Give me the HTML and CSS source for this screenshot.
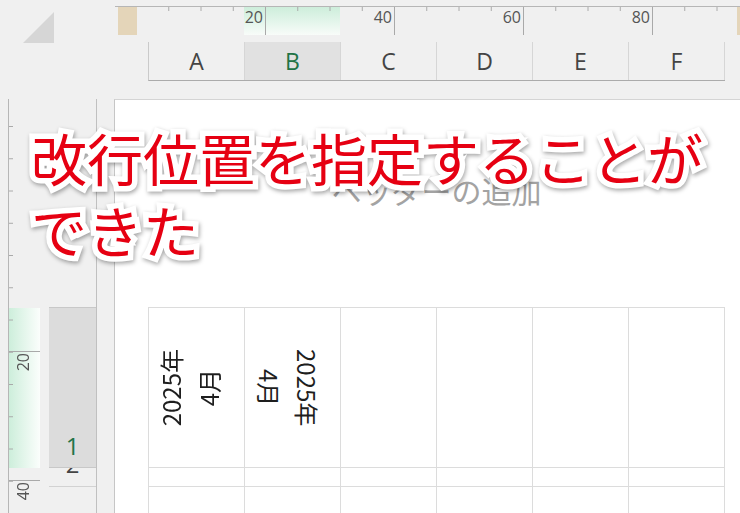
FILE: index.html
```html
<!DOCTYPE html>
<html lang="ja">
<head>
<meta charset="utf-8">
<title>Page Layout</title>
<link rel="stylesheet" href="styles.css">
</head>
<body>
<div class="app">
  <div class="top">
    <div class="corner">
      <svg class="selall" viewBox="0 0 31 31"><polygon points="31,0 31,31 0,31" fill="#d6d6d6"/></svg>
    </div>
    <div class="topright">
      <div class="hruler">
        <div class="hmargin"></div>
        <div class="hscale">
          <div class="hseg">20</div>
          <div class="hseg">40</div>
          <div class="hseg">60</div>
          <div class="hseg">80</div>
          <div class="hrest"><div class="hmargin-r"></div></div>
        </div>
      </div>
      <div class="colheads">
        <div class="ch">A</div>
        <div class="ch sel">B</div>
        <div class="ch">C</div>
        <div class="ch">D</div>
        <div class="ch">E</div>
        <div class="ch">F</div>
      </div>
    </div>
  </div>
  <div class="main">
    <div class="gutter">
      <div class="vruler">
        <div class="vspacer"></div>
        <div class="vseg"><span class="vlabel">20</span></div>
        <div class="vseg"><span class="vlabel">40</span></div>
      </div>
      <div class="rowheads">
        <div class="rh1">1</div>
        <div class="rh2"><span>2</span></div>
        <div class="rh3"></div>
      </div>
    </div>
    <div class="page">
      <div class="hdr">ヘッダーの追加</div>
      <div class="sheet">
        <div class="cell ca"><div class="vt up">2025年<br>4月</div></div>
        <div class="cell cb"><div class="vt">2025年<br>4月</div></div>
        <div class="cell"></div>
        <div class="cell"></div>
        <div class="cell"></div>
        <div class="cell"></div>
        <div class="cell"></div>
        <div class="cell"></div>
        <div class="cell"></div>
        <div class="cell"></div>
        <div class="cell"></div>
        <div class="cell"></div>
        <div class="cell"></div>
        <div class="cell"></div>
        <div class="cell"></div>
        <div class="cell"></div>
        <div class="cell"></div>
        <div class="cell"></div>
      </div>
    </div>
  </div>
  <div class="callout">改行位置を指定することが<br>できた</div>
</div>
</body>
</html>
```

FILE: styles.css
```css
* { box-sizing: border-box; }
html, body { margin: 0; padding: 0; }
body {
  width: 740px;
  height: 513px;
  overflow: hidden;
  background: #f0f0f0;
  font-family: "Open Sans", "Noto Sans", "Noto Sans CJK JP", sans-serif;
}
.app {
  position: relative;
  width: 740px;
  height: 513px;
  overflow: hidden;
  display: flex;
  flex-direction: column;
}

/* ---------- top area ---------- */
.top { display: flex; height: 99px; flex: none; }
.corner { width: 115px; flex: none; padding: 12px 0 0 23px; }
.selall { width: 31px; height: 31px; display: block; }
.topright { flex: 1; display: flex; flex-direction: column; min-width: 0; }

.hruler {
  margin-top: 6px;
  height: 30px;
  border-top: 1px solid #b6b6b6;
  display: flex;
}
.hmargin { width: 19px; height: 28px; margin-left: 3px; background: #e4d5b9; flex: none; }
.hscale {
  flex: 1;
  height: 28px;
  display: flex;
  background:
    linear-gradient(to right, transparent 0 31.25px, #a9a9a9 31.25px 32.25px) 0 0 / 32.25px 4px repeat-x,
    linear-gradient(#cdeedb, #f8fcf9) 107px 0 / 96px 100% no-repeat;
}
.hseg {
  width: 129px;
  flex: none;
  border-right: 1px solid #a9a9a9;
  display: flex;
  justify-content: flex-end;
  padding: 2px 2px 0 0;
  font-size: 16px;
  line-height: 16px;
  color: #555;
}
.hrest { flex: 1; display: flex; justify-content: flex-end; }
.hmargin-r { width: 3px; height: 28px; background: #e4d5b9; }

.colheads {
  margin: 6px 0 0 33px;
  height: 39px;
  display: flex;
  align-self: flex-start;
  border-left: 1px solid #cacaca;
  border-bottom: 1px solid #ababab;
}
.ch {
  width: 96px;
  border-right: 1px solid #d6d6d6;
  display: flex;
  align-items: center;
  justify-content: center;
  font-size: 23px;
  color: #444;
}
.ch.sel { background: #e1e1e1; color: #217346; }

/* ---------- main area ---------- */
.main { flex: 1; display: flex; min-height: 0; }
.gutter { width: 114px; flex: none; display: flex; }

.vruler {
  margin-left: 8px;
  width: 32px;
  border-left: 1px solid #b6b6b6;
  display: flex;
  flex-direction: column;
  background:
    linear-gradient(to bottom, transparent 0 31.25px, #a9a9a9 31.25px 32.25px) 0 -4.25px / 4px 32.25px repeat-y,
    linear-gradient(to right, #cdeedb, #fbfefc) 0 209px / 31px 160px no-repeat;
}
.vspacer { height: 252px; flex: none; }
.vseg { height: 129px; flex: none; border-top: 1px solid #a9a9a9; }
.vlabel {
  display: block;
  width: 16px;
  margin: 1px 0 0 6px;
  writing-mode: vertical-rl;
  text-orientation: sideways;
  transform: rotate(180deg);
  font-size: 16px;
  line-height: 16px;
  color: #555;
}

.rowheads {
  margin-left: 9px;
  width: 48px;
  border-right: 1px solid #c0c0c0;
  display: flex;
  flex-direction: column;
}
.rh1 {
  margin-top: 208px;
  height: 161px;
  flex: none;
  border-top: 1px solid #c8c8c8;
  border-bottom: 1px solid #c8c8c8;
  background: #dcdcdc;
  display: flex;
  align-items: flex-end;
  justify-content: center;
  padding-bottom: 9px;
  color: #217346;
  font-size: 24px;
  line-height: 24px;
}
.rh2 {
  height: 19px;
  flex: none;
  border-bottom: 1px solid #d2d2d2;
  overflow: hidden;
  display: flex;
  justify-content: center;
  align-items: flex-start;
  color: #444;
  font-size: 24px;
  line-height: 24px;
}
.rh2 span { margin-top: -16px; }
.rh3 { flex: 1; }

/* ---------- page ---------- */
.page {
  flex: 1;
  background: #fff;
  border-top: 1px solid #d4d4d4;
  border-left: 1px solid #c6c6c6;
  overflow: hidden;
}
.hdr {
  margin-left: 33px;
  width: 577px;
  height: 207px;
  padding-top: 75px;
  text-align: center;
  font-family: "Noto Sans CJK JP", sans-serif;
  font-size: 30px;
  line-height: 30px;
  color: #a3a3a3;
}
.sheet {
  margin-left: 33px;
  display: grid;
  grid-template-columns: repeat(6, 96px);
  grid-template-rows: 160px 19px 60px;
  width: 577px;
  border-top: 1px solid #dcdcdc;
  border-left: 1px solid #dcdcdc;
}
.cell {
  border-right: 1px solid #dcdcdc;
  border-bottom: 1px solid #dcdcdc;
  display: flex;
  align-items: center;
  justify-content: center;
}
.cell.ca { padding-right: 14px; }
.cell.cb { padding-right: 10px; }
.vt {
  writing-mode: vertical-rl;
  text-orientation: sideways;
  text-align: center;
  font-family: "Noto Sans CJK JP", sans-serif;
  font-size: 24px;
  line-height: 38px;
  color: #1e1e1e;
}
.vt.up { transform: rotate(180deg); }

/* ---------- callout ---------- */
.callout {
  position: absolute;
  left: 31px;
  top: 121px;
  white-space: nowrap;
  font-family: "Noto Sans CJK JP", sans-serif;
  font-weight: 400;
  font-size: 56px;
  line-height: 72px;
  color: #e60012;
  -webkit-text-stroke: 11px #fff;
  paint-order: stroke fill;
  filter: drop-shadow(1px 2px 2px rgba(0, 0, 0, 0.35));
}
```
